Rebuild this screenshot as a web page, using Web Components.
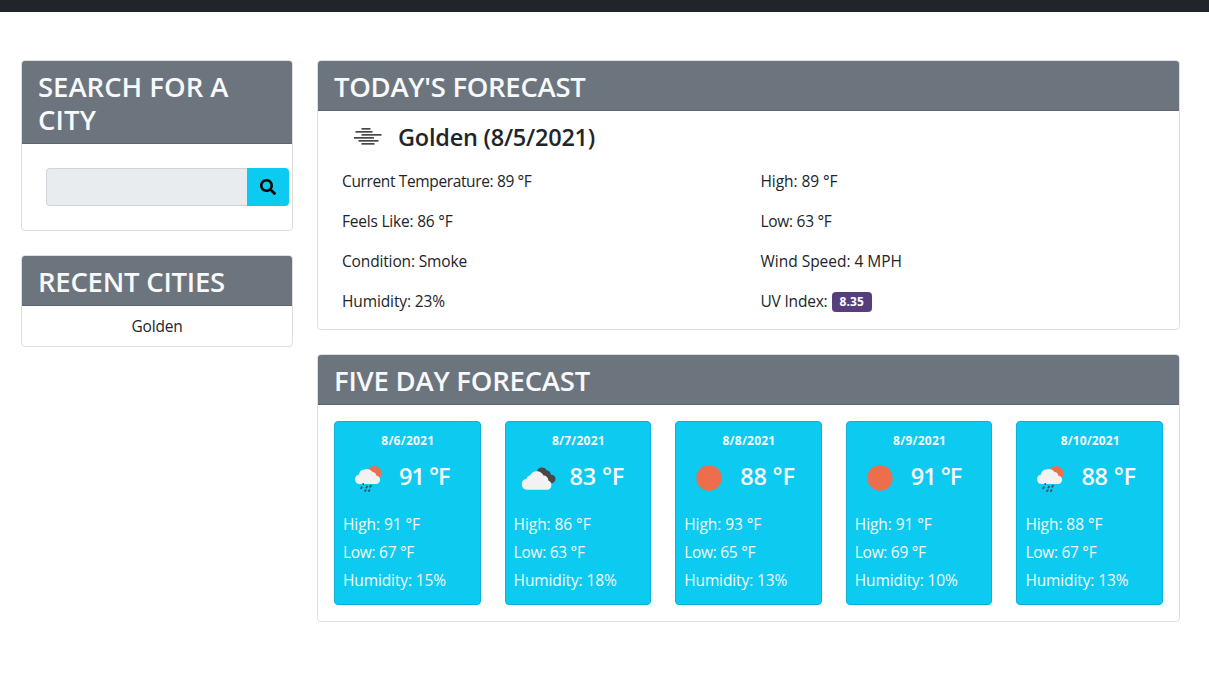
<!DOCTYPE html>
<html lang="en">
<head>
<meta charset="utf-8">
<title>Weather Dashboard</title>
<style>
body{margin:0;background:#fff;color:#212529;font:400 15.5px/24px "Open Sans","Noto Sans",sans-serif}
</style>
</head>
<body>
<weather-dashboard></weather-dashboard>
<script>
const define = (name, html, init) => customElements.define(name, class extends HTMLElement {
  connectedCallback() {
    if (this.shadowRoot) return;
    this.attachShadow({mode: 'open'}).innerHTML = typeof html === 'function' ? html(this) : html;
    if (init) init(this);
  }
});

// Single line of text tracked to the measure given in "w".
define('fit-text', '<style>:host{display:inline-block;white-space:nowrap;vertical-align:top}</style><slot></slot>', el => {
  const w = +el.getAttribute('w');
  const n = el.textContent.length;
  el.style.letterSpacing = ((w - el.getBoundingClientRect().width) / n).toFixed(3) + 'px';
});

const icons = {
  mist: '<g fill="#484849" transform="translate(2.500 3)"><rect x="17" y="14" width="9" height="1.7"/><rect x="11" y="17" width="17" height="1.7"/><rect x="17" y="20" width="20" height="1.7"/><rect x="9.500" y="23" width="20" height="1.7"/><rect x="14" y="26" width="20" height="1.7"/><rect x="17" y="29" width="13" height="1.7"/></g>',
  sun: '<circle cx="25" cy="25" r="12.700" fill="#ec6e4c"/>',
  rain: '<g transform="translate(.7 .6)"><circle cx="30.500" cy="19.700" r="7.300" fill="#ec6e4c"/><path d="M16 30.500a4.800 4.800 0 0 1-.7-9.500 5.700 5.700 0 0 1 5-5 6.500 6.500 0 0 1 8.500 2.500 4 4 0 0 1 3.700 3.500 4.200 4.200 0 0 1-.5 8.500z" fill="#f2f2f2"/><g stroke="#484849" stroke-width="1.800" stroke-linecap="round"><path d="M19.500 30.200v.2M18 33.700l-.6 1M23.300 33l-.6 1M27.200 32.200l-.7 1M22 36.500l-.6 1M25.800 36.500l-.6 1"/></g></g>',
  clouds: '<g transform="translate(.5 .8)"><path d="M22.500 17.500a5.200 5.200 0 0 1 9.800-.7 3.900 3.900 0 0 1 4 4.200 4.200 4.200 0 1 1-.2 8.300z" fill="#484849"/><path d="M12.500 36a5.600 5.600 0 0 1-.6-11.100 5 5 0 0 1 3.800-3.500 7.400 7.400 0 0 1 13.300.4 4.800 4.800 0 0 1 4.800 5A4.900 4.900 0 0 1 33.600 36z" fill="#f2f2f2"/></g>'
};
define('weather-icon', el => `<style>:host{display:block;width:50px;height:50px;flex:none}svg{display:block}</style><svg width="50" height="50" viewBox="0 0 50 50">${icons[el.getAttribute('kind')]}</svg>`);

define('panel-card', `<style>
:host{display:block;box-sizing:border-box;border:1px solid #dfdfdf;border-radius:4px;background:#fff;background-clip:padding-box}
header{background:#6c757d;color:#f8f9fa;padding:9px 16px 7px;border-bottom:1px solid #5e666d;border-radius:3px 3px 0 0;font-size:27.500px;font-weight:600;line-height:33.200px}
</style><header><slot name="title"></slot></header><slot></slot>`);

define('city-search', `<style>
:host{display:flex;padding:24px 3px 24px 24px;height:38px}
input{box-sizing:border-box;flex:1;min-width:0;height:38px;margin:0;border:1px solid #ced4da;border-right:0;border-radius:4px 0 0 4px;background:#e9ecef;outline:0}
button{display:flex;align-items:center;justify-content:center;width:42px;height:38px;border:0;padding:0;border-radius:0 4px 4px 0;background:#0dcaf0}
</style><input aria-label="City"><button aria-label="Search"><svg width="16" height="16" viewBox="0 0 512 512"><path d="M505 442.700L405.300 343c-4.500-4.500-10.600-7-17-7H372c27.600-35.300 44-79.700 44-128C416 93.100 322.900 0 208 0S0 93.100 0 208s93.100 208 208 208c48.300 0 92.700-16.400 128-44v16.300c0 6.400 2.500 12.500 7 17l99.700 99.700c9.400 9.400 24.600 9.400 33.900 0l28.300-28.300c9.400-9.400 9.400-24.600.1-34zM208 336c-70.700 0-128-57.200-128-128 0-70.700 57.200-128 128-128 70.700 0 128 57.200 128 128 0 70.700-57.200 128-128 128z"/></svg></button>`);

define('today-forecast', `<style>
:host{display:block;padding:0 24px;height:218px}
h4{display:flex;align-items:center;gap:6px;margin:0;height:50px;font-size:23.500px;font-weight:600}
h4 span{padding-top:2px}
.grid{display:grid;grid-template-columns:1fr 1fr;column-gap:24px;row-gap:16px;padding-top:8px}
b{display:inline-block;box-sizing:border-box;width:40px;height:20px;padding-left:8px;margin:3px 0 0 4px;border-radius:4px;background:#563d7c;color:#fff;font-size:12px;line-height:20px;font-weight:700;vertical-align:top}
.grid div{height:24px}
</style>
<h4><weather-icon kind="mist"></weather-icon><span><fit-text w="197">Golden (8/5/2021)</fit-text></span></h4>
<div class="grid">
<div><fit-text w="189.500">Current Temperature: 89 °F</fit-text></div><div><fit-text w="77">High: 89 °F</fit-text></div>
<div><fit-text w="110.500">Feels Like: 86 °F</fit-text></div><div><fit-text w="71">Low: 63 °F</fit-text></div>
<div><fit-text w="125">Condition: Smoke</fit-text></div><div><fit-text w="141.500">Wind Speed: 4 MPH</fit-text></div>
<div><fit-text w="103">Humidity: 23%</fit-text></div><div><fit-text w="67">UV Index:</fit-text><b><fit-text w="24.500">8.35</fit-text></b></div>
</div>`);

define('day-card', el => {
  const g = n => el.getAttribute(n);
  return `<style>
:host{display:block;box-sizing:border-box;height:184px;border:1px solid #0cb2d5;border-radius:4px;background:#0dcaf0;color:#f8f9fa;padding:7px 8px}
.date{text-align:center;font-size:12px;font-weight:700;line-height:24px;padding-left:1px}
.temp{display:flex;align-items:center;gap:6px;height:50px;font-size:23.500px;font-weight:600;color:#f8f9fa}
.temp span{margin-top:-5px}
.rows{padding-top:7px;line-height:28px}
</style>
<div class="date"><fit-text w="${g('date').length > 8 ? 59 : 53}">${g('date')}</fit-text></div>
<div class="temp"><weather-icon kind="${g('kind')}"></weather-icon><span><fit-text w="${g('temp').startsWith('91') ? 50.5 : 54.5}">${g('temp')} °F</fit-text></span></div>
<div class="rows"><div><fit-text w="77">High: ${g('high')} °F</fit-text></div><div><fit-text w="71">Low: ${g('low')} °F</fit-text></div><div><fit-text w="103">Humidity: ${g('hum')}%</fit-text></div></div>`;
});

define('weather-dashboard', `<style>
:host{display:block}
nav{height:12px;background:#212529}
main{display:grid;grid-template-columns:272px 863px;column-gap:24px;padding:48px 0 0 21px;align-items:start}
aside,section{display:flex;flex-direction:column;gap:24px}
.search{height:171px}.recent{height:92px}.today{height:270px}.five{height:268px}
.city{text-align:center;padding-top:8px}
.days{display:grid;grid-template-columns:repeat(5,1fr);gap:24px;padding:16px}
</style>
<nav></nav>
<main>
<aside>
<panel-card class="search"><div slot="title"><fit-text w="190.500">SEARCH FOR A</fit-text><br><fit-text w="58">CITY</fit-text></div><city-search></city-search></panel-card>
<panel-card class="recent"><fit-text slot="title" w="187">RECENT CITIES</fit-text><div class="city"><fit-text w="51">Golden</fit-text></div></panel-card>
</aside>
<section>
<panel-card class="today"><fit-text slot="title" w="251.500">TODAY'S FORECAST</fit-text><today-forecast></today-forecast></panel-card>
<panel-card class="five"><fit-text slot="title" w="256">FIVE DAY FORECAST</fit-text><div class="days">
<day-card date="8/6/2021" kind="rain" temp="91" high="91" low="67" hum="15"></day-card>
<day-card date="8/7/2021" kind="clouds" temp="83" high="86" low="63" hum="18"></day-card>
<day-card date="8/8/2021" kind="sun" temp="88" high="93" low="65" hum="13"></day-card>
<day-card date="8/9/2021" kind="sun" temp="91" high="91" low="69" hum="10"></day-card>
<day-card date="8/10/2021" kind="rain" temp="88" high="88" low="67" hum="13"></day-card>
</div></panel-card>
</section>
</main>`);
</script>
</body>
</html>
